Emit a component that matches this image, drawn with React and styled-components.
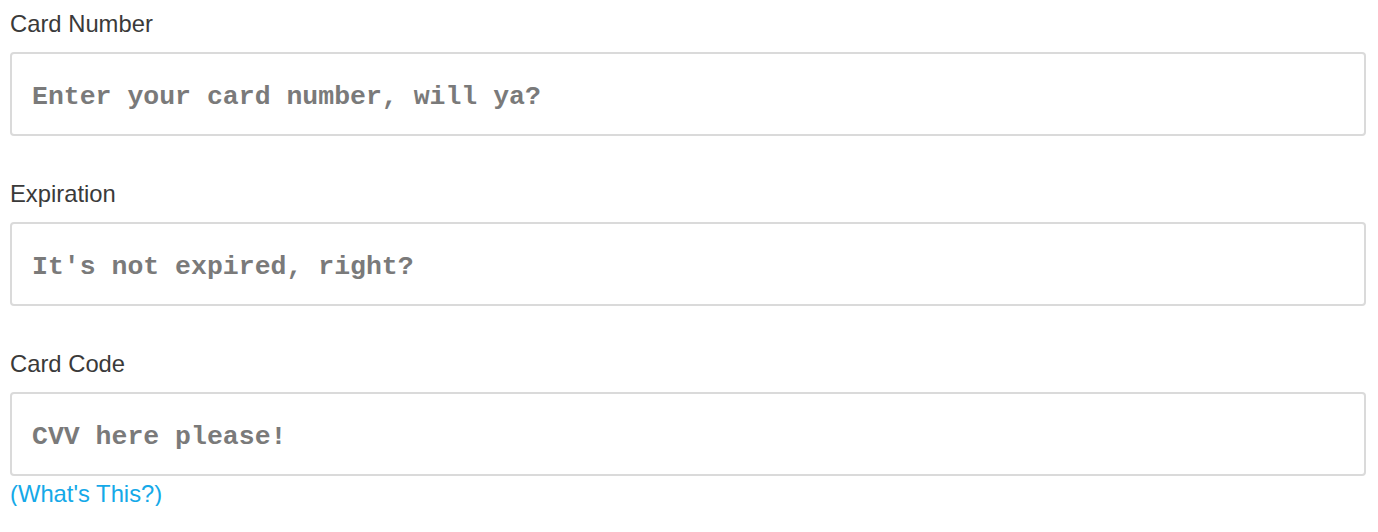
import styled, { createGlobalStyle } from "styled-components";

const GlobalStyle = createGlobalStyle`
  body {
    margin: 0;
    background: #fff;
    font-family: "Liberation Sans", Arial, sans-serif;
  }
`;

const fields = [
  { id: "card-number", label: "Card Number", placeholder: "Enter your card number, will ya?" },
  { id: "expiration", label: "Expiration", placeholder: "It's not expired, right?" },
  { id: "card-code", label: "Card Code", placeholder: "CVV here please!", help: "(What's This?)" },
];

export default function App() {
  return (
    <>
      <GlobalStyle />
      <Form>
        {fields.map((f) => (
          <Field key={f.id}>
            <Label htmlFor={f.id}>{f.label}</Label>
            <Input id={f.id} type="text" placeholder={f.placeholder} />
            {f.help && <HelpLink href="#">{f.help}</HelpLink>}
          </Field>
        ))}
      </Form>
    </>
  );
}

const Form = styled.form`
  display: flex;
  flex-direction: column;
  gap: 44px;
  padding: 10px 12px 0 10px;
`;

const Field = styled.div`
  display: flex;
  flex-direction: column;
  align-items: flex-start;
`;

const Label = styled.label`
  font-size: 23.8px;
  line-height: 28px;
  color: #3a3a3a;
  margin-bottom: 14px;
`;

const Input = styled.input`
  box-sizing: border-box;
  width: 100%;
  height: 84px;
  padding: 6px 20px 0;
  border: 2px solid #dadada;
  border-radius: 4px;
  background: #fff;
  font-family: "Liberation Mono", "Courier New", monospace;
  font-weight: bold;
  font-size: 26.5px;
  color: #444;
  outline: none;

  &::placeholder {
    color: #7a7a7a;
  }
`;

const HelpLink = styled.a`
  margin-top: 6px;
  font-size: 23.8px;
  line-height: 24px;
  color: #15a9e8;
  text-decoration: none;
`;
